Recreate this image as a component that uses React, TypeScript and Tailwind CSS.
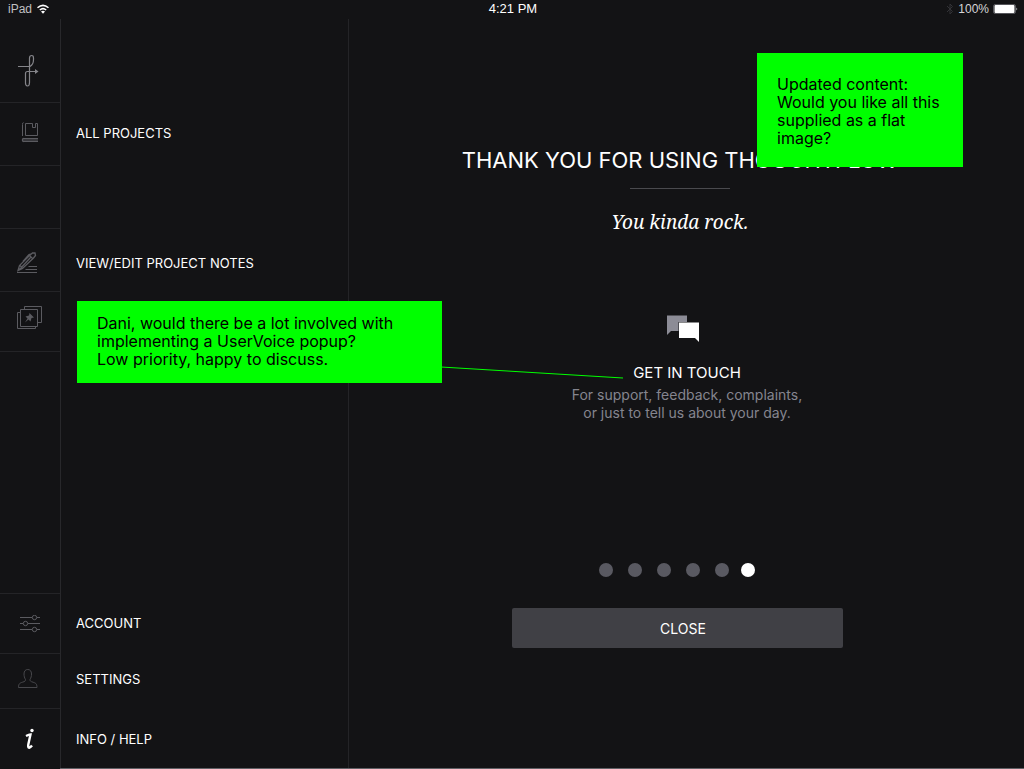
import type { ReactNode } from "react";

const stroke = { fill: "none", stroke: "currentColor", strokeWidth: 1 };

function LogoIcon() {
  return (
    <svg width="22" height="34" viewBox="0 0 22 34" {...stroke} aria-hidden="true">
      <path d="M0 12.5H12C14.5 11 15.5 8 15.5 5.5V4C15.5 2 14.5 1.5 13.8 1.5C12.8 1.5 11.5 2 11.5 4V28.500C11.500 30.500 11 32 9.500 32C8 32 7.500 30.500 7.500 29V19.500C7.500 18 8 17.500 9.500 17.500H18" strokeWidth="1.2" />
      <path d="M17 15L20.500 17.500L17 20Z" fill="currentColor" stroke="none" />
    </svg>
  );
}

function BookIcon() {
  return (
    <svg width="18" height="21" viewBox="0 0 18 21" {...stroke} aria-hidden="true">
      <path d="M2.500 0.500Q1.500 0.500 1.500 2.500V14M4.500 1.500H11.500V5.500H14.500V1.500H16.500V13.500H4.500V1.500M17 16.500H3M17 19.500H3M3 18H17" />
      <path d="M3 16.500Q1.500 16.500 1.500 18Q1.500 19.500 3 19.500" strokeWidth="1.500" />
    </svg>
  );
}

function PenIcon() {
  return (
    <svg width="21" height="21" viewBox="0 0 21 21" {...stroke} aria-hidden="true">
      <path d="M1 18.500L2.500 13.500L12.500 3.500L15.500 1L18 1L18.500 3.500L16.500 6L5.500 16.500ZM2 18L13.500 5.500M12.500 3.500L15.500 6.500M6 9.500L12 2.500L14.500 2M3 13.500L5.500 16" strokeWidth="1.3" />
      <path d="M11.500 14.500H20M8.500 17.500H20M0 20.500H20" />
    </svg>
  );
}

function PinnedPagesIcon() {
  return (
    <svg width="25" height="24" viewBox="0 0 25 24" {...stroke} aria-hidden="true">
      <path d="M3.500 3.500H20.500V20.500H3.500ZM7.500 3V0.500H24.500V16.500H21M3 6.500H0.500V22.500H18.500V21" />
      <path d="M12.500 7L17 11.500L14.500 12L13.500 15.500L11.500 13.500L8 16.500L10.500 12.500L8.500 10.500L12 9.500Z" fill="currentColor" stroke="none" />
    </svg>
  );
}

function SlidersIcon() {
  return (
    <svg width="20" height="18" viewBox="0 0 20 18" {...stroke} aria-hidden="true">
      <path d="M0 2.500H12M17 2.500H20M0 8.500H3M8 8.500H20M0 14.500H12M17 14.500H20" />
      <circle cx="14.500" cy="2.500" r="2.200" />
      <circle cx="5.500" cy="8.500" r="2.200" />
      <circle cx="14.500" cy="14.500" r="2.200" />
    </svg>
  );
}

function PersonIcon() {
  return (
    <svg width="20" height="20" viewBox="0 0 20 20" {...stroke} aria-hidden="true">
      <path d="M0.500 18.500C0.500 14.500 2 14 4.500 13.200C7 12.500 7.500 12 7.500 10.500C6.500 9 6 7 6 5C6 2 7.500 0.500 9.800 0.500C12 0.500 13.500 2 13.500 5C13.500 7 13 9 12 10.500C12 12 12.500 12.500 15 13.200C17.500 14 19 14.500 19 18.500Z" />
    </svg>
  );
}

function InfoIcon() {
  return (
    <svg width="10" height="22" viewBox="0 0 10 22" fill="none" stroke="currentColor" aria-hidden="true">
      <circle cx="7" cy="2.500" r="1.700" fill="currentColor" stroke="none" />
      <path d="M1 8Q4 6.500 5.500 6.500L3.300 16.500Q2.800 19.800 4.200 19.700Q5.500 19.500 7 17.500" strokeWidth="2.400" />
    </svg>
  );
}

function RailRow({ icon, label, name, height, pad = "", iconClass = "text-[#5b5b60]", line = "border-b" }: {
  icon?: ReactNode; label?: string; name?: string; height: string; pad?: string; iconClass?: string; line?: string;
}) {
  const cell = `flex w-15 shrink-0 items-center justify-center border-[#242427] ${line} ${pad} ${iconClass}`;
  if (!label && !name) return <div className={`flex ${height}`}><span className={cell}>{icon}</span></div>;
  return (
    <button type="button" aria-label={name} className={`flex w-full cursor-pointer text-left ${height}`}>
      <span className={cell}>{icon}</span>
      {label && <span className={`self-center pl-4 text-[13px] leading-4 ${pad}`}>{label}</span>}
    </button>
  );
}

function StatusBar() {
  return (
    <header className="grid h-[19px] shrink-0 grid-cols-3 items-center pr-1.5 pb-0.5 pl-2 font-['Liberation_Sans',sans-serif] text-[12px] leading-4">
      <div className="flex items-center gap-1 text-[#c0c0c2]">
        <span>iPad</span>
        <svg width="14" height="10" viewBox="0 0 14 10" fill="none" stroke="white" strokeWidth="1.500" aria-hidden="true">
          <path d="M1.500 3.800Q7 -1 12.500 3.800M3.800 6Q7 3.200 10.200 6" />
          <path d="M5 7.500Q7 6 9 7.500L7 9.700Z" fill="white" stroke="none" />
        </svg>
      </div>
      <time className="text-center text-[13px]">4:21 PM</time>
      <div className="flex items-center justify-end gap-1">
        <svg width="8" height="12" viewBox="0 0 8 12" fill="none" stroke="#333337" aria-hidden="true">
          <path d="M1 3L6.500 8.500L4 11V1L6.500 3.500L1 9" />
        </svg>
        <span className="text-[#d5d5d7]">100%</span>
        <svg width="25" height="10" viewBox="0 0 25 10" aria-hidden="true">
          <rect x="0.500" y="0.500" width="22" height="9" rx="1.500" fill="none" stroke="#55555a" />
          <rect x="1.500" y="1" width="20" height="8" rx="1" fill="white" />
          <path d="M23.500 3.500Q25 5 23.500 6.500Z" fill="white" />
        </svg>
      </div>
    </header>
  );
}

export default function App() {
  return (
    <div className="relative flex min-h-screen flex-col bg-[#131315] font-[Inter,sans-serif] text-white">
      <StatusBar />
      <div className="flex flex-1">
        <nav aria-label="Main" className="relative flex w-[349px] shrink-0 flex-col border-r border-[#242427]">
          <div className="absolute inset-y-0 left-15 w-px bg-[#28282b]" />
          <RailRow height="h-[84px]" icon={<span className="pt-5 pr-0.5"><LogoIcon /></span>} iconClass="text-[#85858a]" />
          <RailRow height="h-[63px]" pad="pb-1" label="ALL PROJECTS" icon={<BookIcon />} />
          <RailRow height="h-[63px]" />
          <RailRow height="h-[63px]" pad="pt-1" label="VIEW/EDIT PROJECT NOTES" icon={<span className="pr-1.5"><PenIcon /></span>} />
          <RailRow height="h-[60px]" pad="pb-2" name="Pinned pages" icon={<span className="pr-0.5"><PinnedPagesIcon /></span>} />
          <div className="flex-1" />
          <RailRow height="h-[60px]" line="border-t" label="ACCOUNT" icon={<SlidersIcon />} />
          <RailRow height="h-[55px]" pad="pb-1" line="border-t" label="SETTINGS" icon={<span className="pr-1"><PersonIcon /></span>} iconClass="text-[#48484c]" />
          <RailRow height="h-[61px]" line="border-t" label="INFO / HELP" icon={<InfoIcon />} iconClass="text-white" />
        </nav>

        <main className="flex flex-1 flex-col items-center pt-[127px] pr-[13px]">
          <h1 className="text-[22px] leading-7 whitespace-nowrap">THANK YOU FOR USING THOUGHTFLOW</h1>
          <hr className="mt-[14px] w-[100px] border-[#4a4a4e]" />
          <p className="mt-[19px] font-['Noto_Serif','Liberation_Serif',serif] text-[19px] leading-7 italic">You kinda rock.</p>

          <section className="mt-[79px] flex flex-col items-center pl-[14px]">
            <svg className="mr-1.5" width="34" height="28" viewBox="0 0 34 28" aria-hidden="true">
              <path d="M0 0.500H20V7H11.500V16H4L0 20Z" fill="#8c8c96" />
              <path d="M12 7.500H32V27L28 23H12Z" fill="white" />
            </svg>
            <h2 className="mt-[20px] text-[15px] leading-5">
              <a href="#contact">GET IN TOUCH</a>
            </h2>
            <p className="mt-[3px] text-center text-[14px] leading-[18px] text-[#85858f]">
              For support, feedback, complaints,<br />or just to tell us about your day.
            </p>
          </section>

          <div className="mt-[141px] flex gap-[15px] pr-[6px]" role="group" aria-label="Pages">
            {[1, 2, 3, 4, 5, 6].map((page) => (
              <button
                key={page}
                type="button"
                aria-label={`Page ${page}`}
                className={page === 6 ? "-ml-[3px] size-[14px] rounded-full bg-white" : "size-[14px] rounded-full bg-[#595961]"}
              />
            ))}
          </div>
          <button type="button" className="mt-[31px] mr-[6px] h-10 w-[331px] rounded-xs bg-[#404045] pl-3 text-[14px]">
            CLOSE
          </button>
        </main>
      </div>
      <div className="absolute right-0 bottom-0 left-15 h-px bg-[#606065]" />

      <aside className="absolute top-[53px] left-[757px] h-[114px] w-[206px] bg-[#00ff00] pt-[22px] pl-5 text-[16px] leading-[18px] text-black">
        Updated content:<br />Would you like all this<br />supplied as a flat<br />image?
      </aside>
      <aside className="absolute top-[301px] left-[77px] h-[82px] w-[365px] bg-[#00ff00] pt-[13px] pl-5 text-[16px] leading-[18px] text-black">
        Dani, would there be a lot involved with<br />implementing a UserVoice popup?<br />Low priority, happy to discuss.
      </aside>
      <svg className="pointer-events-none absolute top-[366px] left-[441px]" width="183" height="13" viewBox="0 0 183 13" aria-hidden="true">
        <path d="M0 1L182 12" stroke="#00ff00" strokeWidth="1" />
      </svg>
    </div>
  );
}
